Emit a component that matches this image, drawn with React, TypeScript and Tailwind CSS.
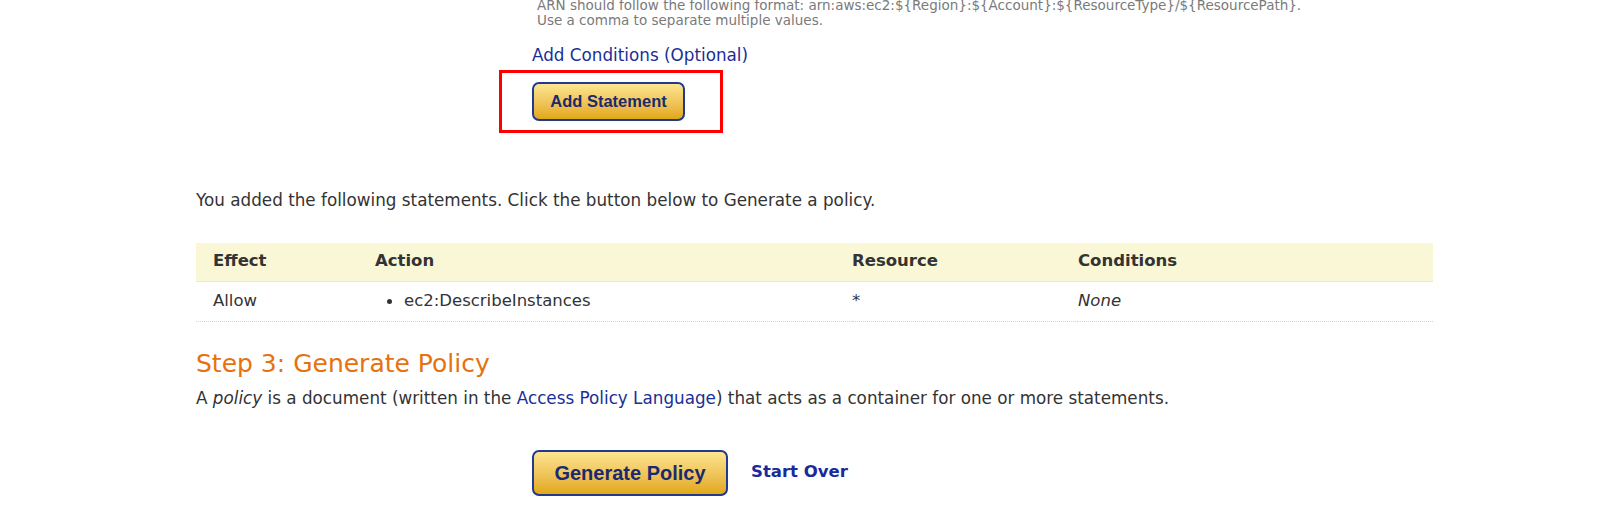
const verdana = { fontFamily: '"DejaVu Sans", Verdana, sans-serif' };

function GoldButton({ label, big }: { label: string; big?: boolean }) {
  return (
    <button
      className={`rounded-[7px] border-2 border-[#1f3a8f] bg-gradient-to-b from-[#fde58e] to-[#e2a80c] font-bold text-[#1b2a6e] ${
        big ? 'h-[46px] w-[196px] text-[20px]' : 'h-[39px] w-[153px] text-[16.5px]'
      }`}
      style={{ fontFamily: '"Liberation Sans", Arial, sans-serif' }}
    >
      {label}
    </button>
  );
}

export default function App() {
  return (
    <div className="h-[512px] w-[1600px] overflow-hidden bg-white text-[#333]" style={verdana}>
      <div className="ml-[196px] w-[1237px]">
        <div className="ml-[336px]">
          <div className="-mt-[2px] pl-[5px] text-[13.5px] leading-[15px] text-[#7a7a7a]">
            <div>ARN should follow the following format: arn:aws:ec2:${'{Region}'}:${'{Account}'}:${'{ResourceType}'}/${'{ResourcePath}'}.</div>
            <div>Use a comma to separate multiple values.</div>
          </div>

          <div className="mt-[17px] text-[16.8px] leading-[20px] text-[#1a2f96]">Add Conditions (Optional)</div>

          <div className="relative mt-[17px] w-fit">
            <GoldButton label="Add Statement" />
            <div className="absolute -left-[33px] -top-[12px] h-[63px] w-[224px] border-[3px] border-[#ff0000]" />
          </div>
        </div>

        <p className="mt-[69px] text-[16.8px] leading-[20px]">
          You added the following statements. Click the button below to Generate a policy.
        </p>

        <table className="mt-[33px] w-full text-left text-[16.5px]">
          <thead>
            <tr className="h-[38px] border-b border-[#efe9bf] bg-[#faf7d7]">
              <th className="w-[179px] pl-[17px] font-bold">Effect</th>
              <th className="w-[477px] pl-[0px] font-bold">Action</th>
              <th className="w-[226px] font-bold">Resource</th>
              <th className="font-bold">Conditions</th>
            </tr>
          </thead>
          <tbody>
            <tr className="h-[40px] border-b border-dotted border-[#dcd8a8]">
              <td className="pl-[17px]">Allow</td>
              <td>
                <span className="ml-[12px] mr-[12px] inline-block h-[5px] w-[5px] rounded-full bg-[#333] align-middle" />
                ec2:DescribeInstances
              </td>
              <td>*</td>
              <td className="italic">None</td>
            </tr>
          </tbody>
        </table>

        <h2 className="mt-[27px] text-[25px] leading-[30px] text-[#e5720f]">Step 3: Generate Policy</h2>
        <p className="mt-[9px] text-[16.8px] leading-[20px]">
          A <i>policy</i> is a document (written in the <span className="text-[#1a2f96]">Access Policy Language</span>) that acts as a container for one or more statements.
        </p>

        <div className="ml-[336px] mt-[42px] flex items-center gap-[23px]">
          <GoldButton label="Generate Policy" big />
          <span
            className="text-[16.5px] font-bold text-[#1a2a99]"
            style={{ fontFamily: '"DejaVu Sans", Verdana, sans-serif' }}
          >
            Start Over
          </span>
        </div>
      </div>
    </div>
  );
}
